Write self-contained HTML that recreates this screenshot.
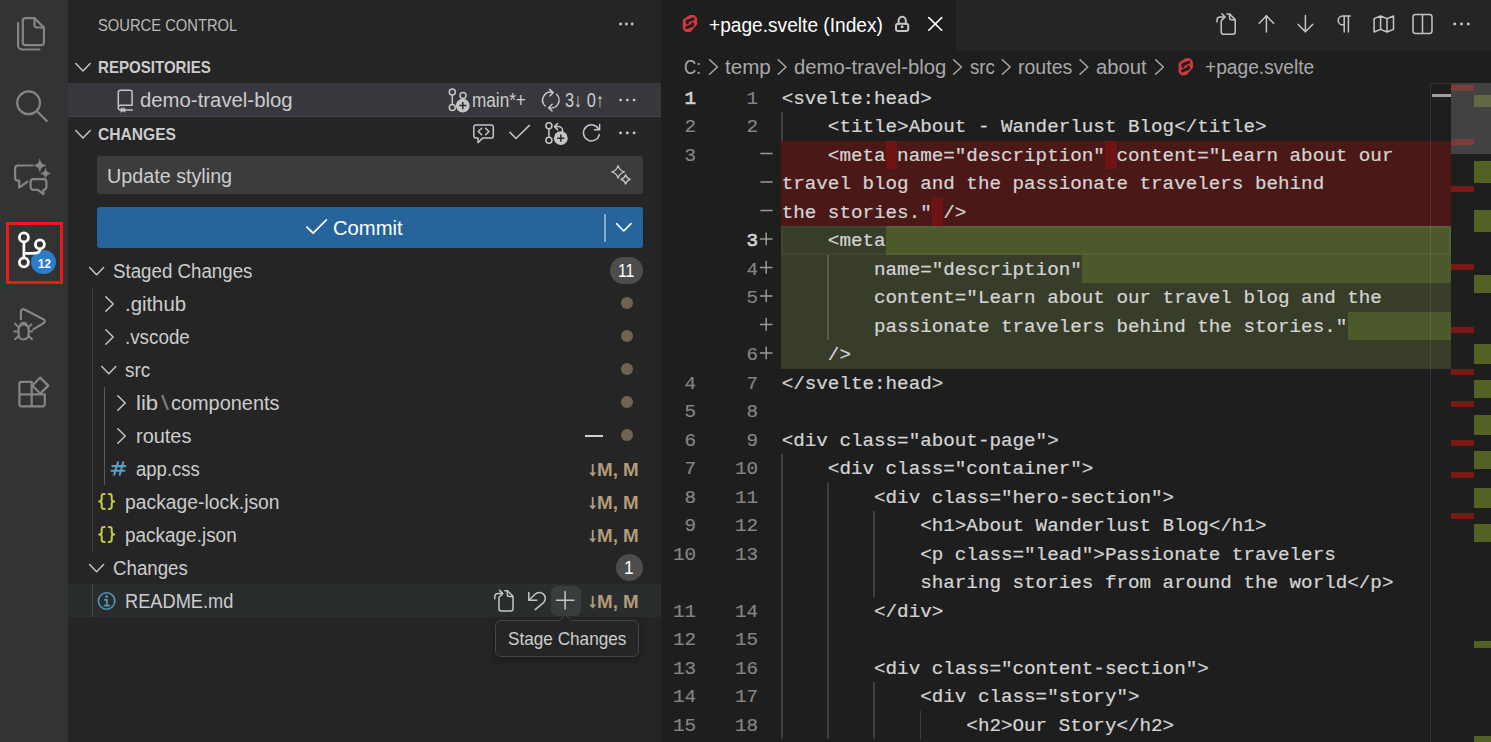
<!DOCTYPE html>
<html><head><meta charset="utf-8"><title>Source Control</title>
<style>
html,body{margin:0;padding:0;background:#1e1e1e;}
body{width:1491px;height:742px;position:relative;overflow:hidden;font-family:"Liberation Sans",sans-serif;}
.bx{position:absolute;box-sizing:border-box;}
.t{position:absolute;height:30px;line-height:30px;white-space:pre;transform-origin:0 50%;font-size:19.5px;color:#cccccc;}
.cl{position:absolute;left:781.7px;height:28px;line-height:28px;white-space:pre;font-family:"Liberation Mono",monospace;font-size:19.24px;color:#d4d4d4;-webkit-text-stroke:0.22px #d4d4d4;}
.ln{-webkit-text-stroke:0.2px currentColor;position:absolute;height:28px;line-height:28px;text-align:right;font-family:"Liberation Mono",monospace;font-size:19.24px;}
svg{position:absolute;overflow:visible;}
</style></head>
<body>
<!-- activity bar -->
<div class=bx style="left:0;top:0;width:68px;height:742px;background:#333333"></div>
<!-- sidebar -->
<div class=bx style="left:68px;top:0;width:593px;height:742px;background:#252526"></div>
<!-- repo row (selected) -->
<div class=bx style="left:68px;top:83px;width:593px;height:33px;background:#37373d"></div>
<div class=bx style="left:68px;top:116px;width:593px;height:1px;background:#47474a"></div>
<!-- input -->
<div class=bx style="left:97px;top:156px;width:546px;height:38px;background:#3c3c3c;border-radius:3px"></div>
<!-- commit button -->
<div class=bx style="left:97px;top:207px;width:546px;height:41px;background:#26649b;border-radius:3px"></div>
<div class=bx style="left:604px;top:213.5px;width:1.5px;height:28px;background:rgba(255,255,255,0.45)"></div>
<!-- badges -->
<div class=bx style="left:610px;top:257px;width:33px;height:27px;background:#4d4d4d;border-radius:14px"></div>
<div class=bx style="left:616px;top:554px;width:27px;height:27px;background:#4d4d4d;border-radius:14px"></div>
<!-- README row hover -->
<div class=bx style="left:68px;top:584px;width:593px;height:33px;background:#2a2d2e"></div>
<div class=bx style="left:551px;top:585.5px;width:30px;height:30.5px;background:#3a3d3e;border-radius:6px"></div>
<!-- indent guides -->
<div class=bx style="left:92px;top:287.5px;width:1px;height:263.5px;background:#3f3f3f"></div>
<div class=bx style="left:104px;top:386.5px;width:1px;height:98.5px;background:#5a5a5a"></div>
<div class=bx style="left:92px;top:584px;width:1px;height:33px;background:#464849"></div>
<!-- status dots -->
<div class=bx style="left:621.3px;top:297.3px;width:12.2px;height:12.2px;border-radius:50%;background:#71644e"></div>
<div class=bx style="left:621.3px;top:330.3px;width:12.2px;height:12.2px;border-radius:50%;background:#71644e"></div>
<div class=bx style="left:621.3px;top:363.3px;width:12.2px;height:12.2px;border-radius:50%;background:#71644e"></div>
<div class=bx style="left:621.3px;top:396.3px;width:12.2px;height:12.2px;border-radius:50%;background:#71644e"></div>
<div class=bx style="left:621.3px;top:429.3px;width:12.2px;height:12.2px;border-radius:50%;background:#71644e"></div>
<div class=bx style="left:585px;top:435px;width:18px;height:1.5px;background:#d0d0d0"></div>
<!-- tooltip -->
<div class=bx style="left:495px;top:620px;width:144px;height:37px;background:#252526;border:1px solid #454545;border-radius:6px;box-shadow:0 2px 8px rgba(0,0,0,0.36)"></div>
<svg width="20" height="10" viewBox="558 613 20 10" style="left:558px;top:613px"><path d="M558.6,621.2 L565.3,614.5 L572,621.2 Z" fill="#252526"/><path d="M558.9,620.9 L565.3,614.5 L571.7,620.9" fill="none" stroke="#454545" stroke-width="1"/></svg>
<!-- activity: red annotation + badge -->
<div class=bx style="left:6px;top:222px;width:57px;height:62px;border:3px solid #e81a1a"></div>
<div class=bx style="left:31.1px;top:249.7px;width:24.6px;height:24.6px;border-radius:50%;background:#2b7cc9"></div>

<!-- editor tab bar -->
<div class=bx style="left:661px;top:0;width:830px;height:49.5px;background:#252526"></div>
<div class=bx style="left:661px;top:0;width:295px;height:49.5px;background:#1e1e1e"></div>

<!-- editor content -->
<div class=bx style="left:781px;top:140.75px;width:670px;height:85.50px;background:#4b1818"></div>
<div class=bx style="left:781px;top:226.25px;width:670px;height:142.50px;background:#373d29"></div>
<div class=bx style="left:885.6px;top:140.75px;width:11.55px;height:28.5px;background:#6f1313"></div>
<div class=bx style="left:1105.0px;top:140.75px;width:11.55px;height:28.5px;background:#6f1313"></div>
<div class=bx style="left:931.8px;top:197.75px;width:11.55px;height:28.5px;background:#6f1313"></div>
<div class=bx style="left:885.6px;top:226.25px;width:565.4px;height:28.5px;background:#4c5a2b"></div>
<div class=bx style="left:1081.9px;top:254.75px;width:369.1px;height:28.5px;background:#4c5a2b"></div>
<div class=bx style="left:1347.5px;top:311.75px;width:103.5px;height:28.5px;background:#4c5a2b"></div>
<div class=bx style="left:781px;top:226.25px;width:670px;height:28.5px;border:2px solid rgba(255,255,255,0.045)"></div>
<div class=bx style="left:781.0px;top:112.25px;width:1.6px;height:28.50px;background:#404040"></div>
<div class=bx style="left:827.2px;top:254.75px;width:1.6px;height:85.50px;background:rgba(255,255,255,0.16)"></div>
<div class=bx style="left:781.0px;top:454.25px;width:1.6px;height:285.00px;background:#404040"></div>
<div class=bx style="left:827.2px;top:482.75px;width:1.6px;height:256.50px;background:#404040"></div>
<div class=bx style="left:873.4px;top:511.25px;width:1.6px;height:85.50px;background:#404040"></div>
<div class=bx style="left:873.4px;top:682.25px;width:1.6px;height:57.00px;background:#404040"></div>
<div class=bx style="left:919.6px;top:710.75px;width:1.6px;height:28.50px;background:#404040"></div>
<div class="ln" style="left:640px;width:56px;top:85px;color:#d0d0d0;-webkit-text-stroke:0.7px #d0d0d0;">1</div>
<div class="ln" style="left:700px;width:58px;top:85px;color:#858585;">1</div>
<div class="cl" style="top:85px">&lt;svelte:head&gt;</div>
<div class="ln" style="left:640px;width:56px;top:113px;color:#858585;">2</div>
<div class="ln" style="left:700px;width:58px;top:113px;color:#858585;">2</div>
<div class="cl" style="top:113px">    &lt;title&gt;About - Wanderlust Blog&lt;/title&gt;</div>
<div class="ln" style="left:640px;width:56px;top:142px;color:#858585;">3</div>
<div class="cl" style="top:142px">    &lt;meta name=&quot;description&quot; content=&quot;Learn about our</div>
<div class="cl" style="top:170px">travel blog and the passionate travelers behind</div>
<div class="cl" style="top:199px">the stories.&quot; /&gt;</div>
<div class="ln" style="left:700px;width:58px;top:227px;color:#d0d0d0;-webkit-text-stroke:0.7px #d0d0d0;">3</div>
<div class="cl" style="top:227px">    &lt;meta</div>
<div class="ln" style="left:700px;width:58px;top:256px;color:#858585;">4</div>
<div class="cl" style="top:256px">        name=&quot;description&quot;</div>
<div class="ln" style="left:700px;width:58px;top:284px;color:#858585;">5</div>
<div class="cl" style="top:284px">        content=&quot;Learn about our travel blog and the</div>
<div class="cl" style="top:313px">        passionate travelers behind the stories.&quot;</div>
<div class="ln" style="left:700px;width:58px;top:341px;color:#858585;">6</div>
<div class="cl" style="top:341px">    /&gt;</div>
<div class="ln" style="left:640px;width:56px;top:370px;color:#858585;">4</div>
<div class="ln" style="left:700px;width:58px;top:370px;color:#858585;">7</div>
<div class="cl" style="top:370px">&lt;/svelte:head&gt;</div>
<div class="ln" style="left:640px;width:56px;top:398px;color:#858585;">5</div>
<div class="ln" style="left:700px;width:58px;top:398px;color:#858585;">8</div>
<div class="ln" style="left:640px;width:56px;top:427px;color:#858585;">6</div>
<div class="ln" style="left:700px;width:58px;top:427px;color:#858585;">9</div>
<div class="cl" style="top:427px">&lt;div class=&quot;about-page&quot;&gt;</div>
<div class="ln" style="left:640px;width:56px;top:455px;color:#858585;">7</div>
<div class="ln" style="left:700px;width:58px;top:455px;color:#858585;">10</div>
<div class="cl" style="top:455px">    &lt;div class=&quot;container&quot;&gt;</div>
<div class="ln" style="left:640px;width:56px;top:484px;color:#858585;">8</div>
<div class="ln" style="left:700px;width:58px;top:484px;color:#858585;">11</div>
<div class="cl" style="top:484px">        &lt;div class=&quot;hero-section&quot;&gt;</div>
<div class="ln" style="left:640px;width:56px;top:512px;color:#858585;">9</div>
<div class="ln" style="left:700px;width:58px;top:512px;color:#858585;">12</div>
<div class="cl" style="top:512px">            &lt;h1&gt;About Wanderlust Blog&lt;/h1&gt;</div>
<div class="ln" style="left:640px;width:56px;top:541px;color:#858585;">10</div>
<div class="ln" style="left:700px;width:58px;top:541px;color:#858585;">13</div>
<div class="cl" style="top:541px">            &lt;p class=&quot;lead&quot;&gt;Passionate travelers</div>
<div class="cl" style="top:569px">            sharing stories from around the world&lt;/p&gt;</div>
<div class="ln" style="left:640px;width:56px;top:598px;color:#858585;">11</div>
<div class="ln" style="left:700px;width:58px;top:598px;color:#858585;">14</div>
<div class="cl" style="top:598px">        &lt;/div&gt;</div>
<div class="ln" style="left:640px;width:56px;top:626px;color:#858585;">12</div>
<div class="ln" style="left:700px;width:58px;top:626px;color:#858585;">15</div>
<div class="ln" style="left:640px;width:56px;top:655px;color:#858585;">13</div>
<div class="ln" style="left:700px;width:58px;top:655px;color:#858585;">16</div>
<div class="cl" style="top:655px">        &lt;div class=&quot;content-section&quot;&gt;</div>
<div class="ln" style="left:640px;width:56px;top:683px;color:#858585;">14</div>
<div class="ln" style="left:700px;width:58px;top:683px;color:#858585;">17</div>
<div class="cl" style="top:683px">            &lt;div class=&quot;story&quot;&gt;</div>
<div class="ln" style="left:640px;width:56px;top:712px;color:#858585;">15</div>
<div class="ln" style="left:700px;width:58px;top:712px;color:#858585;">18</div>
<div class="cl" style="top:712px">                &lt;h2&gt;Our Story&lt;/h2&gt;</div>
<svg width="1491" height="742" viewBox="0 0 1491 742" style="left:0;top:0"><path d="M760.4,153.40 H772.6 M760.4,181.90 H772.6 M760.4,210.40 H772.6 M759.9,238.90 H772.5 M766.2,232.60 V245.20 M759.9,267.40 H772.5 M766.2,261.10 V273.70 M759.9,295.90 H772.5 M766.2,289.60 V302.20 M759.9,324.40 H772.5 M766.2,318.10 V330.70 M759.9,352.90 H772.5 M766.2,346.60 V359.20" stroke="#9a9a9a" stroke-width="1.5" fill="none"/></svg>

<!-- overview rulers -->
<div class=bx style="left:1430px;top:83px;width:1.2px;height:659px;background:rgba(255,255,255,0.10)"></div>
<div class=bx style="left:1431px;top:83px;width:20px;height:1px;background:rgba(255,255,255,0.10)"></div>
<div class=bx style="left:1431.5px;top:93.5px;width:19.5px;height:3.5px;background:#a0a0a0"></div>
<div class=bx style="left:1451px;top:83px;width:40px;height:659px;background:#1e1e1e"></div>
<div id=ov></div>
<div class=bx style="left:1451px;top:84.7px;width:23px;height:6.5px;background:#7a1717"></div>
<div class=bx style="left:1451px;top:138.7px;width:23px;height:6.1px;background:#7a1717"></div>
<div class=bx style="left:1451px;top:185.7px;width:23px;height:6.0px;background:#7a1717"></div>
<div class=bx style="left:1451px;top:264.0px;width:23px;height:6.1px;background:#7a1717"></div>
<div class=bx style="left:1451px;top:327.0px;width:23px;height:6.1px;background:#7a1717"></div>
<div class=bx style="left:1451px;top:368.7px;width:23px;height:6.5px;background:#7a1717"></div>
<div class=bx style="left:1451px;top:400.9px;width:23px;height:6.2px;background:#7a1717"></div>
<div class=bx style="left:1451px;top:440.4px;width:23px;height:6.1px;background:#7a1717"></div>
<div class=bx style="left:1451px;top:472.2px;width:23px;height:6.0px;background:#7a1717"></div>
<div class=bx style="left:1451px;top:513.3px;width:23px;height:6.1px;background:#7a1717"></div>
<div class=bx style="left:1474px;top:95.1px;width:17px;height:11.9px;background:#536223"></div>
<div class=bx style="left:1474px;top:161.0px;width:17px;height:21.8px;background:#536223"></div>
<div class=bx style="left:1474px;top:209.9px;width:17px;height:21.8px;background:#536223"></div>
<div class=bx style="left:1474px;top:275.0px;width:17px;height:18.1px;background:#536223"></div>
<div class=bx style="left:1474px;top:344.0px;width:17px;height:19.8px;background:#536223"></div>
<div class=bx style="left:1474px;top:380.0px;width:17px;height:17.7px;background:#536223"></div>
<div class=bx style="left:1474px;top:415.3px;width:17px;height:20.1px;background:#536223"></div>
<div class=bx style="left:1474px;top:451.3px;width:17px;height:18.2px;background:#536223"></div>
<div class=bx style="left:1474px;top:488.4px;width:17px;height:19.9px;background:#536223"></div>
<div class=bx style="left:1474px;top:524.2px;width:17px;height:18.2px;background:#536223"></div>
<div class=bx style="left:1474px;top:641.4px;width:17px;height:6.5px;background:#536223"></div>
<div class=bx style="left:1474px;top:735.7px;width:17px;height:6.3px;background:#536223"></div>
<div class=bx style="left:1451px;top:83px;width:40px;height:71px;background:rgba(121,121,121,0.4)"></div>

<!-- TEXT -->
<div class=t style="left:97.5px;top:11px;font-size:17px;color:#bbbbbb;transform:scaleX(0.8675);">SOURCE CONTROL</div>
<div class=t style="left:98.0px;top:53px;font-size:17px;font-weight:700;transform:scaleX(0.8867);">REPOSITORIES</div>
<div class=t style="left:98.0px;top:120px;font-size:17px;font-weight:700;transform:scaleX(0.9175);">CHANGES</div>
<div class=t style="left:140.2px;top:85px;transform:scaleX(1.0429);">demo-travel-blog</div>
<div class=t style="left:472.4px;top:85px;transform:scaleX(0.8800);">main*+</div>
<div class=t style="left:565.0px;top:85px;transform:scaleX(0.8389);">3↓ 0↑</div>
<div class=t style="left:107.2px;top:161px;transform:scaleX(1.0123);">Update styling</div>
<div class=t style="left:333.2px;top:213px;color:#ffffff;transform:scaleX(1.0376);">Commit</div>
<div class=t style="left:112.8px;top:256px;transform:scaleX(0.9595);">Staged Changes</div>
<div class=t style="left:125.0px;top:289px;transform:scaleX(1.0416);">.github</div>
<div class=t style="left:125.0px;top:322px;transform:scaleX(0.9642);">.vscode</div>
<div class=t style="left:125.0px;top:355px;transform:scaleX(0.9731);">src</div>
<div class=t style="left:136.3px;top:388px;transform:scaleX(1.1324);">lib</div>
<div class=t style="left:161.0px;top:388px;color:#808080;transform:scaleX(1.4755);">\</div>
<div class=t style="left:170.8px;top:388px;transform:scaleX(1.0213);">components</div>
<div class=t style="left:136.3px;top:421px;transform:scaleX(1.0221);">routes</div>
<div class=t style="left:136.3px;top:454px;transform:scaleX(0.9494);">app.css</div>
<div class=t style="left:125.2px;top:487px;transform:scaleX(0.9904);">package-lock.json</div>
<div class=t style="left:125.2px;top:520px;transform:scaleX(0.9720);">package.json</div>
<div class=t style="left:112.8px;top:553px;transform:scaleX(0.9582);">Changes</div>
<div class=t style="left:124.8px;top:586px;transform:scaleX(0.9350);">README.md</div>
<div class=t style="left:596.5px;top:455px;font-size:18.5px;font-weight:700;color:#b39c78;transform:scaleX(1.0144);">M, M</div>
<div class=t style="left:596.5px;top:488px;font-size:18.5px;font-weight:700;color:#b39c78;transform:scaleX(1.0144);">M, M</div>
<div class=t style="left:596.5px;top:521px;font-size:18.5px;font-weight:700;color:#b39c78;transform:scaleX(1.0144);">M, M</div>
<div class=t style="left:596.5px;top:587px;font-size:18.5px;font-weight:700;color:#b39c78;transform:scaleX(1.0144);">M, M</div>
<div class=t style="left:618.1px;top:256px;font-size:17.5px;color:#ffffff;transform:scaleX(0.9025);">11</div>
<div class=t style="left:624.4px;top:553px;font-size:17.5px;color:#ffffff;transform:scaleX(0.9965);">1</div>
<div class=t style="left:507.8px;top:624px;font-size:18.4px;transform:scaleX(0.9338);">Stage Changes</div>
<div class=t style="left:37.5px;top:249px;font-size:13.5px;font-weight:700;color:#ffffff;transform:scaleX(0.8582);">12</div>
<div class=t style="left:709.2px;top:10px;color:#ffffff;transform:scaleX(0.9812);">+page.svelte (Index)</div>
<div class=t style="left:684.2px;top:52px;color:#a9a9a9;transform:scaleX(0.8718);">C:</div>
<div class=t style="left:724.5px;top:52px;color:#a9a9a9;transform:scaleX(1.0563);">temp</div>
<div class=t style="left:793.6px;top:52px;color:#a9a9a9;transform:scaleX(1.0415);">demo-travel-blog</div>
<div class=t style="left:969.8px;top:52px;color:#a9a9a9;transform:scaleX(0.9615);">src</div>
<div class=t style="left:1018.2px;top:52px;color:#a9a9a9;transform:scaleX(1.0018);">routes</div>
<div class=t style="left:1096.2px;top:52px;color:#a9a9a9;transform:scaleX(1.0346);">about</div>
<div class=t style="left:1205.2px;top:52px;color:#a9a9a9;transform:scaleX(0.9834);">+page.svelte</div>

<!-- ICONS -->
<svg width="1491" height="742" viewBox="0 0 1491 742" style="left:0;top:0">
<path d="M25.4,18.1 H34.5 L43.9,27.5 V42.6 a2.6,2.6 0 0 1 -2.6,2.6 H25.4 a2.6,2.6 0 0 1 -2.6,-2.6 V20.7 a2.6,2.6 0 0 1 2.6,-2.6 Z" stroke="#858585" stroke-width="2.2" fill="none" stroke-linecap="round" stroke-linejoin="round" />
<path d="M34.5,18.5 V25 a2.5,2.5 0 0 0 2.5,2.5 H43.5" stroke="#858585" stroke-width="2.2" fill="none" stroke-linecap="round" stroke-linejoin="round" />
<path d="M18.1,23 V45.5 a4,4 0 0 0 4,4 H39.5" stroke="#858585" stroke-width="2.2" fill="none" stroke-linecap="round" stroke-linejoin="round" />
<circle cx="28.6" cy="102.8" r="11.4" stroke="#858585" stroke-width="2.2" fill="none"/>
<path d="M36.8,111 L46.8,121" stroke="#858585" stroke-width="2.2" fill="none" stroke-linecap="round" stroke-linejoin="round" />
<path d="M32.4,165.5 H18.1 a3,3 0 0 0 -3,3 V177.7 a3,3 0 0 0 3,3 H19.2 V187.6 L27.4,181.6" stroke="#858585" stroke-width="2.2" fill="none" stroke-linecap="round" stroke-linejoin="round" />
<path d="M33.6,179.1 H43.4 a3,3 0 0 1 3,3 V186.8 a3,3 0 0 1 -3,3 H43.4 V194.2 L38,189.8 H33.6 a3,3 0 0 1 -3,-3 V182.1 a3,3 0 0 1 3,-3 Z" stroke="#858585" stroke-width="2.2" fill="none" stroke-linecap="round" stroke-linejoin="round" />
<path d="M39.8,159.29999999999998 Q40.619,164.781 46.099999999999994,165.6 Q40.619,166.41899999999998 39.8,171.9 Q38.980999999999995,166.41899999999998 33.5,165.6 Q38.980999999999995,164.781 39.8,159.29999999999998 Z" stroke="#858585" stroke-width="0.5" fill="#858585" stroke-linecap="round" stroke-linejoin="round" />
<path d="M45.6,168.6 Q46.237,172.863 50.5,173.5 Q46.237,174.137 45.6,178.4 Q44.963,174.137 40.7,173.5 Q44.963,172.863 45.6,168.6 Z" stroke="#858585" stroke-width="0.5" fill="#858585" stroke-linecap="round" stroke-linejoin="round" />
<path d="M23.9,242 V258" stroke="#ffffff" stroke-width="2.7" fill="none" stroke-linecap="round" stroke-linejoin="round" />
<path d="M39.9,249 C39.9,253.4 36,253.4 32,253.4 H24" stroke="#ffffff" stroke-width="2.7" fill="none" stroke-linecap="round" stroke-linejoin="round" />
<circle cx="23.9" cy="237.4" r="4.5" stroke="#ffffff" stroke-width="2.8" fill="none"/>
<circle cx="39.9" cy="244.3" r="4.5" stroke="#ffffff" stroke-width="2.8" fill="none"/>
<circle cx="23.9" cy="262.3" r="4.5" stroke="#ffffff" stroke-width="2.8" fill="none"/>
<path d="M20.9,319.3 V311.6 a2.4,2.4 0 0 1 3.6,-2.1 L43.8,319.4 a2.1,2.1 0 0 1 0,3.6 L33.3,329.4" stroke="#858585" stroke-width="2.2" fill="none" stroke-linecap="round" stroke-linejoin="round" />
<path d="M18.6,329.3 a5,5 0 0 1 10,0 V334.5 a5,5 0 0 1 -10,0 Z" stroke="#858585" stroke-width="2.2" fill="none" stroke-linecap="round" stroke-linejoin="round" />
<path d="M20.3,325.5 a3.4,3.4 0 0 1 6.6,0" stroke="#858585" stroke-width="2.2" fill="none" stroke-linecap="round" stroke-linejoin="round" />
<path d="M18.4,331.6 H14.2 M18.6,327.3 L15,323.6 M18.9,335.9 L15,339.3 M28.8,331.6 H32 M28.6,327.3 L31.4,324.4 M28.5,335.9 L32,339.3" stroke="#858585" stroke-width="2.0" fill="none" stroke-linecap="round" stroke-linejoin="round" />
<path d="M31.7,381.8 H21.5 a2.1,2.1 0 0 0 -2.1,2.1 V404.3 a2.1,2.1 0 0 0 2.1,2.1 H42.7 a2.1,2.1 0 0 0 2.1,-2.1 V394.3 H19.4 M31.7,381.8 V406.4" stroke="#858585" stroke-width="2.2" fill="none" stroke-linecap="round" stroke-linejoin="round" />
<path d="M40.2,377.6 L48.2,385.6 L40.2,393.6 L32.3,385.6 Z" stroke="#858585" stroke-width="2.2" fill="none" stroke-linecap="round" stroke-linejoin="round" />
<circle cx="620.6" cy="24" r="1.45" fill="#c5c5c5"/>
<circle cx="626.4" cy="24" r="1.45" fill="#c5c5c5"/>
<circle cx="632.2" cy="24" r="1.45" fill="#c5c5c5"/>
<path d="M75.8,63.5 L83.0,71 L90.2,63.5" stroke="#c5c5c5" stroke-width="1.5" fill="none" stroke-linecap="round" stroke-linejoin="round" />
<path d="M75.8,130.5 L83.0,138 L90.2,130.5" stroke="#c5c5c5" stroke-width="1.5" fill="none" stroke-linecap="round" stroke-linejoin="round" />
<path d="M118.3,107.6 V92.5 a2.2,2.2 0 0 1 2.2,-2.2 H129.9 a2.2,2.2 0 0 1 2.2,2.2 V105.2 H120.6 a2.3,2.3 0 0 0 0,4.7 H121 M125,109.9 H132.3" stroke="#c5c5c5" stroke-width="1.5" fill="none" stroke-linecap="round" stroke-linejoin="round" />
<path d="M120.9,108.4 V112.3 L122.9,110.9 L124.9,112.3 V108.4 Z" stroke="#c5c5c5" stroke-width="0.6" fill="#c5c5c5" stroke-linecap="round" stroke-linejoin="round" />
<path d="M452.3,95 V104.5" stroke="#c5c5c5" stroke-width="1.5" fill="none" stroke-linecap="round" stroke-linejoin="round" />
<circle cx="452.3" cy="92" r="3" stroke="#c5c5c5" stroke-width="1.5" fill="none"/>
<circle cx="452.3" cy="107.5" r="3" stroke="#c5c5c5" stroke-width="1.5" fill="none"/>
<circle cx="463.0" cy="95.5" r="3" stroke="#c5c5c5" stroke-width="1.5" fill="none"/>
<circle cx="462.8" cy="105.6" r="6.9" fill="#c5c5c5"/>
<path d="M459.2,105.6 H466.40000000000003 M462.8,102.0 V109.19999999999999" stroke="#2b2b2e" stroke-width="1.5" fill="none"/>
<path d="M548.9,128.8 V137.3" stroke="#c5c5c5" stroke-width="1.5" fill="none" stroke-linecap="round" stroke-linejoin="round" />
<circle cx="548.9" cy="125.8" r="3" stroke="#c5c5c5" stroke-width="1.5" fill="none"/>
<circle cx="548.9" cy="140.3" r="3" stroke="#c5c5c5" stroke-width="1.5" fill="none"/>
<path d="M554.9,126.6 H558.4 a4.2,4.2 0 0 1 4.2,4.2 V132.2" stroke="#c5c5c5" stroke-width="1.5" fill="none" stroke-linecap="round" stroke-linejoin="round" />
<path d="M557.5,123.6 L554.5,126.6 L557.5,129.6" stroke="#c5c5c5" stroke-width="1.5" fill="none" stroke-linecap="round" stroke-linejoin="round" />
<circle cx="560.8" cy="138.2" r="6.9" fill="#c5c5c5"/>
<path d="M557.1999999999999,138.2 H564.4 M560.8,134.6 V141.79999999999998" stroke="#2b2b2e" stroke-width="1.5" fill="none"/>
<path d="M545.2,106 A8,8 0 0 1 552.6,92.4 M556.5,94.2 A8,8 0 0 1 549,107.8" stroke="#c5c5c5" stroke-width="1.5" fill="none" stroke-linecap="round" stroke-linejoin="round" />
<path d="M549.6,89.4 L553.2,92.6 L549.8,96" stroke="#c5c5c5" stroke-width="1.5" fill="none" stroke-linecap="round" stroke-linejoin="round" />
<path d="M552.2,104.3 L548.6,107.6 L552,111" stroke="#c5c5c5" stroke-width="1.5" fill="none" stroke-linecap="round" stroke-linejoin="round" />
<circle cx="620.6" cy="100.1" r="1.45" fill="#c5c5c5"/>
<circle cx="627.3" cy="100.1" r="1.45" fill="#c5c5c5"/>
<circle cx="634.1" cy="100.1" r="1.45" fill="#c5c5c5"/>
<circle cx="620.6" cy="132.9" r="1.45" fill="#c5c5c5"/>
<circle cx="627.3" cy="132.9" r="1.45" fill="#c5c5c5"/>
<circle cx="634.1" cy="132.9" r="1.45" fill="#c5c5c5"/>
<path d="M475.9,124.9 H491.2 a2.1,2.1 0 0 1 2.1,2.1 V136 a2.1,2.1 0 0 1 -2.1,2.1 H482.6 L478,142.6 V138.1 H475.9 a2.1,2.1 0 0 1 -2.1,-2.1 V127 a2.1,2.1 0 0 1 2.1,-2.1 Z" stroke="#c5c5c5" stroke-width="1.5" fill="none" stroke-linecap="round" stroke-linejoin="round" />
<path d="M481.6,128.2 L478.3,131.5 L481.6,134.8 M485.6,128.2 L488.9,131.5 L485.6,134.8" stroke="#c5c5c5" stroke-width="1.5" fill="none" stroke-linecap="round" stroke-linejoin="round" />
<path d="M510,132.4 L516,138.5 L529.4,125.4" stroke="#c5c5c5" stroke-width="1.5" fill="none" stroke-linecap="round" stroke-linejoin="round" />
<path d="M598.6,129.2 A8,8 0 1 0 599.3,134.6" stroke="#c5c5c5" stroke-width="1.5" fill="none" stroke-linecap="round" stroke-linejoin="round" />
<path d="M599.6,124.6 V129.7 H594.5" stroke="#c5c5c5" stroke-width="1.5" fill="none" stroke-linecap="round" stroke-linejoin="round" />
<path d="M618.1,165.6 Q619.486,170.514 624.4,171.9 Q619.486,173.286 618.1,178.20000000000002 Q616.714,173.286 611.8000000000001,171.9 Q616.714,170.514 618.1,165.6 Z" stroke="#c5c5c5" stroke-width="1.3" fill="none" stroke-linecap="round" stroke-linejoin="round" />
<path d="M625.6,174.8 Q626.612,178.388 630.2,179.4 Q626.612,180.412 625.6,184.0 Q624.5880000000001,180.412 621.0,179.4 Q624.5880000000001,178.388 625.6,174.8 Z" stroke="#c5c5c5" stroke-width="1.3" fill="none" stroke-linecap="round" stroke-linejoin="round" />
<path d="M306.9,227.2 L313.1,233.2 L326.4,219.8" stroke="#ffffff" stroke-width="1.7" fill="none" stroke-linecap="round" stroke-linejoin="round" />
<path d="M616.6,223.6 L623.8,231 L631,223.6" stroke="#ffffff" stroke-width="1.6" fill="none" stroke-linecap="round" stroke-linejoin="round" />
<path d="M89.6,267.6 L96.6,274.8 L103.6,267.6" stroke="#c5c5c5" stroke-width="1.5" fill="none" stroke-linecap="round" stroke-linejoin="round" />
<path d="M105.8,296.8 L113.2,304 L105.8,311.2" stroke="#c5c5c5" stroke-width="1.5" fill="none" stroke-linecap="round" stroke-linejoin="round" />
<path d="M105.8,329.8 L113.2,337 L105.8,344.2" stroke="#c5c5c5" stroke-width="1.5" fill="none" stroke-linecap="round" stroke-linejoin="round" />
<path d="M101.8,366.6 L108.8,373.8 L115.8,366.6" stroke="#c5c5c5" stroke-width="1.5" fill="none" stroke-linecap="round" stroke-linejoin="round" />
<path d="M117.8,395.8 L125.2,403 L117.8,410.2" stroke="#c5c5c5" stroke-width="1.5" fill="none" stroke-linecap="round" stroke-linejoin="round" />
<path d="M117.8,428.8 L125.2,436 L117.8,443.2" stroke="#c5c5c5" stroke-width="1.5" fill="none" stroke-linecap="round" stroke-linejoin="round" />
<path d="M89.6,564.6 L96.6,571.8 L103.6,564.6" stroke="#c5c5c5" stroke-width="1.5" fill="none" stroke-linecap="round" stroke-linejoin="round" />
<path d="M112.4,466.1 H125.4 M111.5,470.7 H124.5 M118,462.3 L114.2,474.7 M123.2,462.3 L119.8,474.7" stroke="#5a9fc6" stroke-width="2.1" fill="none" stroke-linecap="round" stroke-linejoin="round" stroke-linecap="butt"/>
<path d="M104.6,493.9 C101.39999999999999,493.9 101.69999999999999,495.4 101.69999999999999,496.79999999999995 V499.0 C101.69999999999999,500.59999999999997 100.8,501.4 99.19999999999999,501.4 C100.8,501.4 101.69999999999999,502.2 101.69999999999999,503.79999999999995 V506.0 C101.69999999999999,507.4 101.39999999999999,508.9 104.6,508.9" stroke="#cbcb41" stroke-width="2.0" fill="none" stroke-linecap="round" stroke-linejoin="round" />
<path d="M108.8,493.9 C112.0,493.9 111.7,495.4 111.7,496.79999999999995 V499.0 C111.7,500.59999999999997 112.6,501.4 114.2,501.4 C112.6,501.4 111.7,502.2 111.7,503.79999999999995 V506.0 C111.7,507.4 112.0,508.9 108.8,508.9" stroke="#cbcb41" stroke-width="2.0" fill="none" stroke-linecap="round" stroke-linejoin="round" />
<path d="M104.6,526.9 C101.39999999999999,526.9 101.69999999999999,528.4 101.69999999999999,529.8 V532.0 C101.69999999999999,533.6 100.8,534.4 99.19999999999999,534.4 C100.8,534.4 101.69999999999999,535.1999999999999 101.69999999999999,536.8 V539.0 C101.69999999999999,540.4 101.39999999999999,541.9 104.6,541.9" stroke="#cbcb41" stroke-width="2.0" fill="none" stroke-linecap="round" stroke-linejoin="round" />
<path d="M108.8,526.9 C112.0,526.9 111.7,528.4 111.7,529.8 V532.0 C111.7,533.6 112.6,534.4 114.2,534.4 C112.6,534.4 111.7,535.1999999999999 111.7,536.8 V539.0 C111.7,540.4 112.0,541.9 108.8,541.9" stroke="#cbcb41" stroke-width="2.0" fill="none" stroke-linecap="round" stroke-linejoin="round" />
<path d="M591.8,464 H593.6 V472.6 H596.3 L592.7,476.4 L589.1,472.6 H591.8 Z" fill="#b39c78"/>
<path d="M591.8,497 H593.6 V505.6 H596.3 L592.7,509.4 L589.1,505.6 H591.8 Z" fill="#b39c78"/>
<path d="M591.8,530 H593.6 V538.6 H596.3 L592.7,542.4 L589.1,538.6 H591.8 Z" fill="#b39c78"/>
<path d="M591.8,596 H593.6 V604.6 H596.3 L592.7,608.4 L589.1,604.6 H591.8 Z" fill="#b39c78"/>
<circle cx="106.6" cy="601" r="8.2" stroke="#519aba" stroke-width="1.6" fill="none"/>
<circle cx="106.6" cy="596.6" r="1.4" fill="#519aba"/>
<path d="M104.8,599.8 H107 V605.4 M104.4,605.6 H109.2" stroke="#519aba" stroke-width="1.7" fill="none" stroke-linecap="round" stroke-linejoin="round" />
<path d="M499.0,597.6 V608.8000000000001 a2.2,2.2 0 0 0 2.2,2.2 H510.79999999999995 a2.2,2.2 0 0 0 2.2,-2.2 V596.2 L507.59999999999997,590.8000000000001 H504.79999999999995" stroke="#c5c5c5" stroke-width="1.5" fill="none" stroke-linecap="round" stroke-linejoin="round" />
<path d="M507.4,591.2 V594.4000000000001 a2,2 0 0 0 2,2 H512.6" stroke="#c5c5c5" stroke-width="1.5" fill="none" stroke-linecap="round" stroke-linejoin="round" />
<path d="M494.79999999999995,598.8000000000001 V596.8000000000001 a3.2,3.2 0 0 1 3.2,-3.2 H502.2" stroke="#c5c5c5" stroke-width="1.5" fill="none" stroke-linecap="round" stroke-linejoin="round" />
<path d="M499.59999999999997,590.4000000000001 L502.79999999999995,593.6 L499.59999999999997,596.8000000000001" stroke="#c5c5c5" stroke-width="1.5" fill="none" stroke-linecap="round" stroke-linejoin="round" />
<path d="M528.8,592.6 V600.3 H536.8" stroke="#c5c5c5" stroke-width="1.5" fill="none" stroke-linecap="round" stroke-linejoin="round" />
<path d="M529.4,599.7 L535,594.2 A6,6 0 0 1 543.6,602.6 L535.2,609.6" stroke="#c5c5c5" stroke-width="1.5" fill="none" stroke-linecap="round" stroke-linejoin="round" />
<path d="M556.4,600.3 H573.8 M565.1,591.5 V609" stroke="#c5c5c5" stroke-width="1.5" fill="none" stroke-linecap="round" stroke-linejoin="round" />
<path d="M690.2,16.4 L693.6,16.4 L695.7,18.6 L695.7,23.9 L689.8,30.6 L686.4,30.6 L684.2,28.4 L684.2,20.5 Z" fill="#d2393f" stroke="#d2393f" stroke-width="2.9" stroke-linejoin="round"/>
<path d="M687.3000000000001,23.1 L687.0,21.299999999999997 L693.2,18.9" stroke="#1e1e1e" stroke-width="2.9" fill="none" stroke-linecap="round" stroke-linejoin="round" />
<path d="M686.7,27.6 L692.9,25.1 L692.6,23.6" stroke="#1e1e1e" stroke-width="2.9" fill="none" stroke-linecap="round" stroke-linejoin="round" />
<path d="M1186.0,59.7 L1189.4,59.7 L1191.5,61.9 L1191.5,67.2 L1185.6,73.9 L1182.2,73.9 L1180.0,71.7 L1180.0,63.8 Z" fill="#d2393f" stroke="#d2393f" stroke-width="2.9" stroke-linejoin="round"/>
<path d="M1183.1000000000001,66.4 L1182.8000000000002,64.6 L1189.0,62.2" stroke="#1e1e1e" stroke-width="2.9" fill="none" stroke-linecap="round" stroke-linejoin="round" />
<path d="M1182.5,70.9 L1188.7,68.4 L1188.4,66.9" stroke="#1e1e1e" stroke-width="2.9" fill="none" stroke-linecap="round" stroke-linejoin="round" />
<path d="M898.6,23.8 V20.4 a3.6,3.6 0 0 1 7.2,0 V23.8" stroke="#c5c5c5" stroke-width="2.0" fill="none" stroke-linecap="round" stroke-linejoin="round" />
<path d="M898,23.8 H906.2 a2,2 0 0 1 2,2 V29 a2,2 0 0 1 -2,2 H898 a2,2 0 0 1 -2,-2 V25.8 a2,2 0 0 1 2,-2 Z" stroke="#c5c5c5" stroke-width="2.0" fill="none" stroke-linecap="round" stroke-linejoin="round" />
<circle cx="902.1" cy="26.8" r="1.5" fill="#c5c5c5"/>
<path d="M928.8,17.6 L941.7,30.2 M941.7,17.6 L928.8,30.2" stroke="#ffffff" stroke-width="1.6" fill="none" stroke-linecap="round" stroke-linejoin="round" />
<path d="M709.6,59.7 L717.4,67 L709.6,74.3" stroke="#a9a9a9" stroke-width="1.5" fill="none" stroke-linecap="round" stroke-linejoin="round" />
<path d="M778.2,59.7 L786.0,67 L778.2,74.3" stroke="#a9a9a9" stroke-width="1.5" fill="none" stroke-linecap="round" stroke-linejoin="round" />
<path d="M953.6,59.7 L961.4,67 L953.6,74.3" stroke="#a9a9a9" stroke-width="1.5" fill="none" stroke-linecap="round" stroke-linejoin="round" />
<path d="M1002.4,59.7 L1010.1999999999999,67 L1002.4,74.3" stroke="#a9a9a9" stroke-width="1.5" fill="none" stroke-linecap="round" stroke-linejoin="round" />
<path d="M1080,59.7 L1087.8,67 L1080,74.3" stroke="#a9a9a9" stroke-width="1.5" fill="none" stroke-linecap="round" stroke-linejoin="round" />
<path d="M1155.6,59.7 L1163.3999999999999,67 L1155.6,74.3" stroke="#a9a9a9" stroke-width="1.5" fill="none" stroke-linecap="round" stroke-linejoin="round" />
<path d="M1221.1999999999998,20.9 V32.1 a2.2,2.2 0 0 0 2.2,2.2 H1233.0 a2.2,2.2 0 0 0 2.2,-2.2 V19.5 L1229.8,14.1 H1227.0" stroke="#c5c5c5" stroke-width="1.5" fill="none" stroke-linecap="round" stroke-linejoin="round" />
<path d="M1229.6,14.5 V17.7 a2,2 0 0 0 2,2 H1234.8" stroke="#c5c5c5" stroke-width="1.5" fill="none" stroke-linecap="round" stroke-linejoin="round" />
<path d="M1217.0,22.1 V20.1 a3.2,3.2 0 0 1 3.2,-3.2 H1224.3999999999999" stroke="#c5c5c5" stroke-width="1.5" fill="none" stroke-linecap="round" stroke-linejoin="round" />
<path d="M1221.8,13.7 L1225.0,16.9 L1221.8,20.1" stroke="#c5c5c5" stroke-width="1.5" fill="none" stroke-linecap="round" stroke-linejoin="round" />
<path d="M1266.4,15.6 V32 M1259.2,23.2 L1266.4,15.8 L1273.6,23.2" stroke="#c5c5c5" stroke-width="1.5" fill="none" stroke-linecap="round" stroke-linejoin="round" />
<path d="M1305.4,15.6 V32 M1298.2,24.4 L1305.4,31.8 L1312.6,24.4" stroke="#c5c5c5" stroke-width="1.5" fill="none" stroke-linecap="round" stroke-linejoin="round" />
<path d="M1350.2,16 H1342.6 a4.4,4.4 0 0 0 0,8.8 H1344.2 M1344.2,16 V32 M1348.4,16 V32" stroke="#c5c5c5" stroke-width="1.5" fill="none" stroke-linecap="round" stroke-linejoin="round" />
<path d="M1374.1,18.6 L1380.6,16 V29.4 L1374.1,32 Z M1380.6,16 L1387,18.6 V32 L1380.6,29.4 M1387,18.6 L1393.5,16 V29.4 L1387,32" stroke="#c5c5c5" stroke-width="1.5" fill="none" stroke-linecap="round" stroke-linejoin="round" />
<path d="M1415.6,14.5 H1429.4 a2.6,2.6 0 0 1 2.6,2.6 V30.8 a2.6,2.6 0 0 1 -2.6,2.6 H1415.6 a2.6,2.6 0 0 1 -2.6,-2.6 V17.1 a2.6,2.6 0 0 1 2.6,-2.6 Z M1422.5,14.5 V33.4" stroke="#c5c5c5" stroke-width="1.5" fill="none" stroke-linecap="round" stroke-linejoin="round" />
<circle cx="1454.7" cy="24" r="1.45" fill="#c5c5c5"/>
<circle cx="1461.5" cy="24" r="1.45" fill="#c5c5c5"/>
<circle cx="1468.3" cy="24" r="1.45" fill="#c5c5c5"/>
</svg>
</body></html>
